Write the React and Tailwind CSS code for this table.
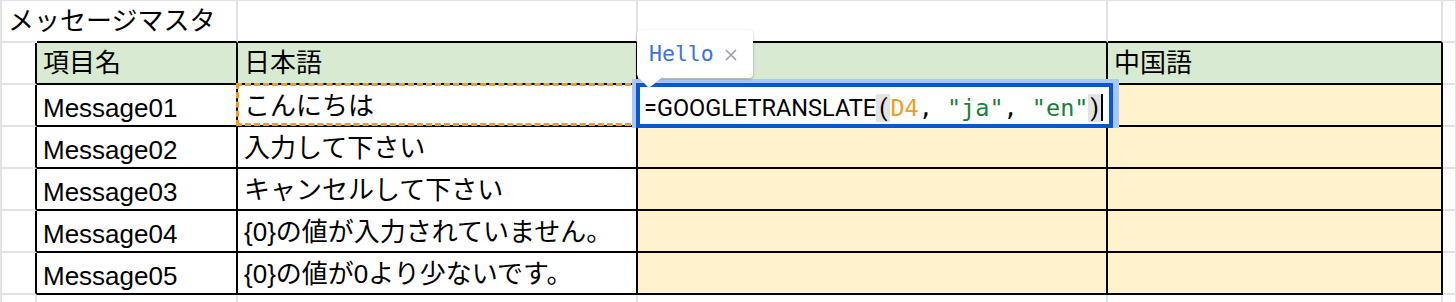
import React from 'react';

const GRAY = 'border-[#e2e2e2]';

const Cell = ({ className = '', children }) => (
  <div className={`box-border h-[42px] border-r-2 border-b-2 flex items-end px-[6px] whitespace-nowrap ${className}`}>
    {children}
  </div>
);

const messages = [
  ['Message01', 'こんにちは'],
  ['Message02', '入力して下さい'],
  ['Message03', 'キャンセルして下さい'],
  ['Message04', '{0}の値が入力されていません。'],
  ['Message05', '{0}の値が0より少ないです。'],
];

const Editor = () => (
  <>
    {/* formula editor */}
    <div className="absolute left-[-6px] top-[-6px] w-[487px] h-[49px] bg-[#a8c7fa] pt-[4px] pl-[4px]">
      <div className="w-[477px] h-[45px] border-[4px] border-[#0b57d0] bg-white pl-[4px] pt-[2px] leading-[36px] whitespace-nowrap">
        <span className="font-['Roboto'] text-[23.5px] text-black">=GOOGLETRANSLATE</span>
        <span className="font-['Roboto'] text-[24px] text-black bg-[#e3e3e3] px-[3px]">(</span>
        <span className="font-['DejaVu_Sans_Mono'] text-[23.5px]">
          <span className="text-[#f29b1e]">D4</span>
          <span className="text-black">, </span>
          <span className="text-[#188038]">"ja"</span>
          <span className="text-black">, </span>
          <span className="text-[#188038]">"en"</span>
        </span>
        <span className="font-['Roboto'] text-[24px] text-black bg-[#e3e3e3] px-[2px]">)</span>
        <span className="inline-block w-[2px] h-[27px] bg-black align-[-5px]" />
      </div>
    </div>
    {/* result tooltip */}
    <div className="absolute left-[-1px] top-[-55px] w-[116px] h-[48px] bg-white rounded-[4px] shadow-[0_1px_3px_rgba(0,0,0,0.3)] flex items-center pl-[12px] gap-[10px]">
      <span className="font-['DejaVu_Sans_Mono'] text-[21.5px] text-[#3b73d9] leading-none">Hello</span>
      <svg width="14" height="14" viewBox="0 0 14 14" className="mt-[2px]">
        <path d="M2 2L12 12M12 2L2 12" stroke="#9aa0a6" strokeWidth="1.6" />
      </svg>
    </div>
    <svg className="absolute left-[0px] top-[-8px]" width="28" height="12" viewBox="0 0 28 12">
      <path d="M0 0 L25 0 L11 11 Z" fill="white" />
      <path d="M25 0 L11 11" stroke="rgba(0,0,0,0.12)" strokeWidth="1" fill="none" />
    </svg>
  </>
);

export default function App() {
  return (
    <div className="w-[1456px] h-[302px] overflow-hidden bg-white font-['Liberation_Sans','Noto_Sans_CJK_JP',sans-serif] text-[26px] text-black">
      <div className={`grid grid-cols-[37px_201px_400px_470px_335px_1fr] border-t ${GRAY}`}>
        {/* title row */}
        <Cell className={`border-l-2 ${GRAY} border-r-transparent pb-[5px] relative z-10`}>
          <span className="leading-[30px]">メッセージマスタ</span>
        </Cell>
        <Cell className={`${GRAY} border-b-black`} />
        <Cell className={`${GRAY} border-b-black`} />
        <Cell className={`${GRAY} border-b-black`} />
        <Cell className={`${GRAY} border-b-black`} />
        <Cell className={GRAY} />

        {/* header row */}
        <Cell className={`border-l-2 ${GRAY} border-r-black`} />
        <Cell className="border-black bg-[#d9ead3] pb-[5px]"><span className="leading-[30px]">項目名</span></Cell>
        <Cell className="border-black bg-[#d9ead3] pb-[5px]"><span className="leading-[30px]">日本語</span></Cell>
        <Cell className="border-black bg-[#d9ead3]" />
        <Cell className="border-black bg-[#d9ead3] pb-[5px]"><span className="leading-[30px]">中国語</span></Cell>
        <Cell className={GRAY} />

        {/* message rows */}
        {messages.map(([key, text], i) => (
          <React.Fragment key={key}>
            <Cell className={`border-l-2 ${GRAY} border-r-black`} />
            <Cell className="border-black pb-[2px]"><span className="leading-[30px]">{key}</span></Cell>
            <Cell className={`border-black pb-[4px] ${i === 0 ? 'relative z-10' : ''}`}>
              <span className="leading-[30px]">{text}</span>
              {i === 0 && (
                <div className="absolute left-[-2px] top-[-2px] w-[404px] h-[43px] border-[3px] border-dashed border-[#f29b1e]" />
              )}
            </Cell>
            <Cell className={`border-black bg-[#fff2cc] ${i === 0 ? 'relative z-20' : ''}`}>
              {i === 0 && <Editor />}
            </Cell>
            <Cell className="border-black bg-[#fff2cc]" />
            <Cell className={GRAY} />
          </React.Fragment>
        ))}

        {/* trailing row */}
        <Cell className={`border-l-2 ${GRAY}`} />
        <Cell className={GRAY} />
        <Cell className={GRAY} />
        <Cell className={GRAY} />
        <Cell className={GRAY} />
        <Cell className={GRAY} />
      </div>
    </div>
  );
}
